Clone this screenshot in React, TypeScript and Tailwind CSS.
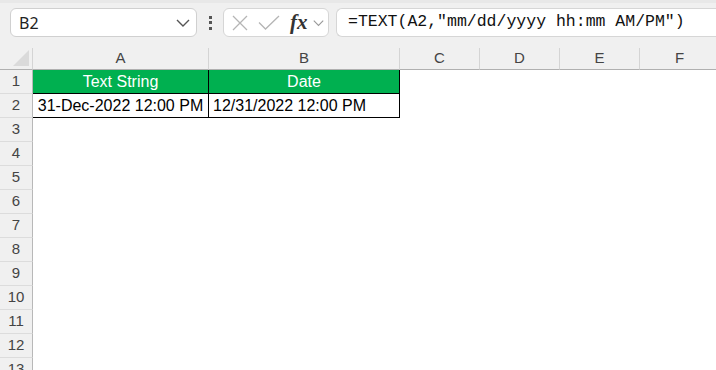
const cols = [
  { name: "A", w: "w-[176px]" },
  { name: "B", w: "w-[191px]" },
  { name: "C", w: "w-[80px]" },
  { name: "D", w: "w-[80px]" },
  { name: "E", w: "w-[80px]" },
  { name: "F", w: "w-[80px]" },
];

const rows = [3, 4, 5, 6, 7, 8, 9, 10, 11, 12, 13];

function Chevron({ className }: { className?: string }) {
  return (
    <svg width="14" height="8" viewBox="0 0 14 8" className={className}>
      <polyline points="1,1 7,7 13,1" fill="none" stroke="currentColor" strokeWidth="1.4" />
    </svg>
  );
}

function RowHead({ n }: { n: number }) {
  return (
    <div className="w-[33px] h-[24px] shrink-0 bg-[#f0f0f0] border-r border-b border-r-[#b8b8b8] border-b-[#dcdcdc] flex items-center justify-center text-[15px] text-[#444]">
      {n}
    </div>
  );
}

export default function App() {
  return (
    <div className="w-[716px] h-[370px] overflow-hidden bg-white font-['Liberation_Sans',sans-serif]">
      {/* Formula bar */}
      <div className="h-[48px] bg-[#f0f0f0] border-t-[3px] border-[#e8e8e8] flex items-start pt-[5px] pl-[10px]">
        <div className="w-[187px] h-[29px] bg-white border border-[#d0d0d0] rounded-[6px] flex items-center justify-between pl-[8px] pr-[6px]">
          <span className="text-[16px] text-[#222] font-['Noto_Sans',sans-serif]">B2</span>
          <Chevron className="text-[#555]" />
        </div>
        <div className="w-[26px] h-[29px] flex flex-col items-center justify-center gap-[2.5px]">
          <span className="w-[3px] h-[3px] bg-[#555]" />
          <span className="w-[3px] h-[3px] bg-[#555]" />
          <span className="w-[3px] h-[3px] bg-[#555]" />
        </div>
        <div className="w-[106px] h-[29px] bg-white border border-[#d6d6d6] rounded-[6px] flex items-center pl-[8px]">
          <svg width="16" height="16" viewBox="0 0 16 16" className="text-[#b5b5b5]">
            <path d="M1 1 15 15M15 1 1 15" stroke="currentColor" strokeWidth="1.3" fill="none" />
          </svg>
          <svg width="22" height="15" viewBox="0 0 22 15" className="text-[#b5b5b5] ml-[10px]">
            <path d="M1 7.5 7.5 14 21 1" stroke="currentColor" strokeWidth="1.3" fill="none" />
          </svg>
          <span className="ml-[10px] text-[21px] italic font-bold text-[#333] leading-none font-['Liberation_Serif',serif]">fx</span>
          <Chevron className="text-[#999] ml-[5px] w-[11px]" />
        </div>
        <div className="ml-[7px] flex-1 h-[29px] bg-white border border-r-0 border-[#d6d6d6] rounded-l-[6px] flex items-center pl-[11px]">
          <span className="text-[16.5px] text-[#111] font-['Liberation_Mono',monospace] whitespace-nowrap">
            =TEXT(A2,"mm/dd/yyyy hh:mm AM/PM")
          </span>
        </div>
      </div>

      {/* Column headers */}
      <div className="flex h-[22px]">
        <div className="w-[33px] h-[22px] shrink-0 bg-[#f0f0f0] border-r border-b border-r-[#d4d4d4] border-b-[#b0b0b0] flex items-end justify-end p-[3px]">
          <svg width="16" height="16" viewBox="0 0 16 16">
            <polygon points="0,16 16,16 16,0" fill="#dadada" />
          </svg>
        </div>
        {cols.map((c) => (
          <div
            key={c.name}
            className={`${c.w} h-[22px] shrink-0 bg-[#f0f0f0] border-r border-b border-r-[#d4d4d4] border-b-[#b0b0b0] flex items-center justify-center text-[15px] text-[#444]`}
          >
            {c.name}
          </div>
        ))}
      </div>

      {/* Row 1 */}
      <div className="flex h-[24px]">
        <RowHead n={1} />
        <div className="w-[176px] h-[24px] shrink-0 bg-[#00b050] border-r border-b border-black flex items-center justify-center text-[16px] text-white">
          Text String
        </div>
        <div className="w-[191px] h-[24px] shrink-0 bg-[#00b050] border-r border-b border-black flex items-center justify-center text-[16px] text-white">
          Date
        </div>
      </div>

      {/* Row 2 */}
      <div className="flex h-[24px]">
        <RowHead n={2} />
        <div className="w-[176px] h-[24px] shrink-0 border-r border-b border-black flex items-center justify-center text-[16px] text-black">
          31-Dec-2022 12:00 PM
        </div>
        <div className="w-[191px] h-[24px] shrink-0 border-r border-b border-black flex items-center pl-[4px] text-[16px] text-black">
          12/31/2022 12:00 PM
        </div>
      </div>

      {rows.map((n) => (
        <div key={n} className="flex h-[24px]">
          <RowHead n={n} />
        </div>
      ))}
    </div>
  );
}
